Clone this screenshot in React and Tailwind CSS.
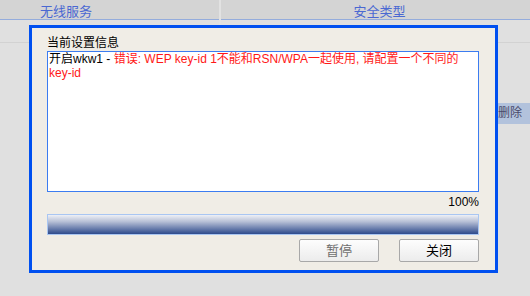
import React from 'react';

const font = { fontFamily: '"Liberation Sans", "Noto Sans CJK SC", sans-serif' };

const App = () => {
    return (
        <div
            className="relative w-[530px] h-[296px] overflow-hidden bg-[#e0e0e0] text-[12px]"
            style={font}
        >
            {/* table behind the dialog */}
            <div className="grid grid-cols-[221px_1fr] h-[20px] bg-[#d4d4d4] border-b border-[#94acdc]">
                <div className="border-r-2 border-[#e2e2e2] pl-[40px] pt-[2px] text-[13px] text-[#4a68d2]">无线服务</div>
                <div className="text-center pt-[2px] pl-[8px] text-[13px] text-[#4a68d2]">安全类型</div>
            </div>
            <div className="grid grid-cols-[221px_1fr] h-[23px] border-b border-[#d2d2d2]">
                <div className="border-r-2 border-[#e2e2e2]"></div>
                <div></div>
            </div>
            <div className="h-[60px]"></div>
            <div className="flex justify-end">
                <div className="w-[34px] h-[21px] bg-[#b2c2dc] text-[#4a4a6a] pl-[2px] leading-[21px]">删除</div>
            </div>

            {/* progress dialog */}
            <div className="absolute left-[29px] top-[25px] w-[469px] h-[248px] border-[3px] border-[#0050f0] bg-[#f0ede6] pl-[15px] pr-[16px] pt-[8px]">
                <div className="leading-[14px] text-black">当前设置信息</div>
                <div className="mt-[1px] h-[141px] bg-white border border-[#3c7cf0] px-[1px] leading-[14px]">
                    <span className="text-black">开启wkw1 - </span>
                    <span className="text-[#ff1818]">错误: WEP key-id 1不能和RSN/WPA一起使用, 请配置一个不同的 key-id</span>
                </div>
                <div className="text-right leading-[14px] mt-[3px] text-black">100%</div>
                <div className="mt-[5px] h-[21px] border border-[#a9c6f2] bg-[linear-gradient(to_bottom,#eef0f6,#b7c0d6_35%,#2d4a8c)]"></div>
                <div className="flex justify-end gap-[20px] mt-[4px]">
                    <button className="w-[80px] h-[23px] border border-[#a8a8a8] rounded-[2px] bg-[linear-gradient(to_bottom,#fdfdfd,#ececec)] text-[#6e6e6e] text-[13px]">暂停</button>
                    <button className="w-[80px] h-[23px] border border-[#a8a8a8] rounded-[2px] bg-[linear-gradient(to_bottom,#fdfdfd,#ececec)] text-black text-[13px]">关闭</button>
                </div>
            </div>
        </div>
    );
};

export default App;
